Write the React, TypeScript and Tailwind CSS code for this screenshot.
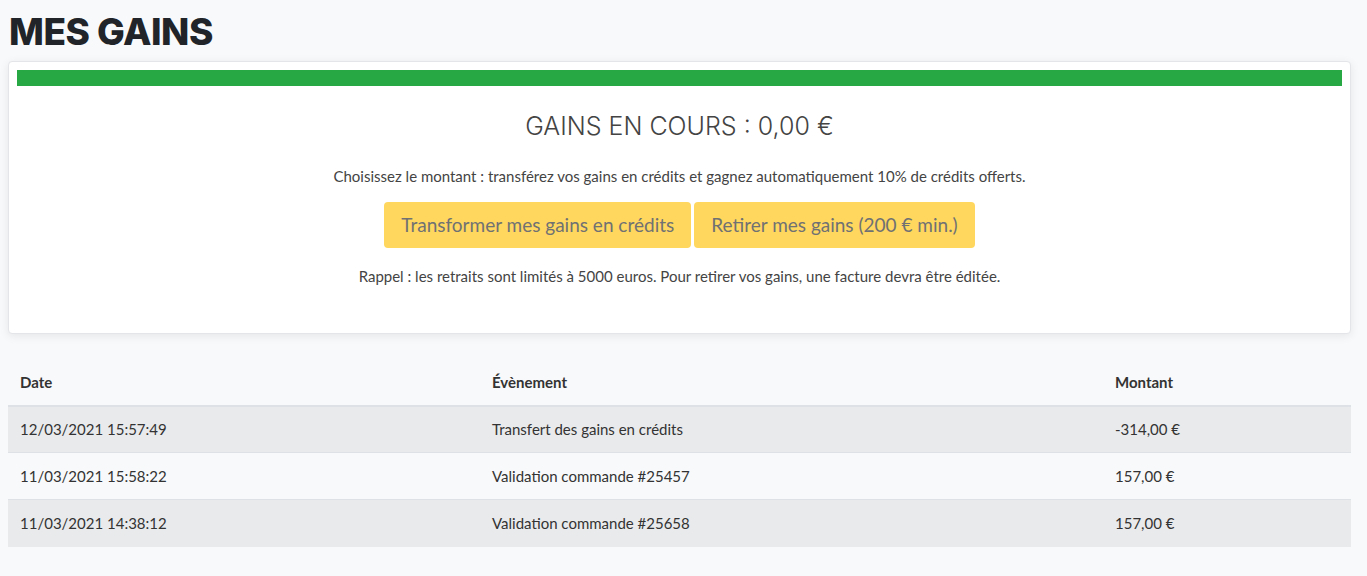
import React from 'react';

interface GainRow {
  date: string;
  event: string;
  amount: string;
}

const rows: GainRow[] = [
  { date: '12/03/2021 15:57:49', event: 'Transfert des gains en crédits', amount: '-314,00 €' },
  { date: '11/03/2021 15:58:22', event: 'Validation commande #25457', amount: '157,00 €' },
  { date: '11/03/2021 14:38:12', event: 'Validation commande #25658', amount: '157,00 €' },
];

export default function App() {
  return (
    <div className="min-h-[576px] bg-[#f8f9fa] px-2 pt-[9px] text-[#212529] font-['Lato',sans-serif]">
      <h1 className="pl-px text-[37px] leading-[46px] font-extrabold tracking-[-0.5px] text-[#212529] font-['Inter',sans-serif]">
        MES GAINS
      </h1>

      <div className="mt-[6px] w-[1343px] rounded border border-[#e3e5e8] bg-white p-2 pb-[47px] shadow-[0_2px_10px_rgba(0,0,0,0.08)]">
        <div className="h-4 bg-[#28a745]" />
        <div className="flex flex-col items-center">
          <h2 className="mt-[22px] text-[25px] leading-[36px] font-light text-[#444] font-['Inter',sans-serif]">
            GAINS EN COURS : 0,00 €
          </h2>
          <p className="mt-[22px] text-[15px] leading-[20px] text-[#444]">
            Choisissez le montant : transférez vos gains en crédits et gagnez automatiquement 10% de crédits offerts.
          </p>
          <div className="mt-[16px] flex gap-[3px]">
            <button disabled className="h-[46px] rounded-[4px] bg-[#ffd75e] px-[17px] text-[19px] text-[#707173]">
              Transformer mes gains en crédits
            </button>
            <button disabled className="h-[46px] rounded-[4px] bg-[#ffd75e] px-[17px] text-[19px] text-[#707173]">
              Retirer mes gains (200 € min.)
            </button>
          </div>
          <p className="mt-[18px] text-[15px] leading-[20px] text-[#444]">
            Rappel : les retraits sont limités à 5000 euros. Pour retirer vos gains, une facture devra être éditée.
          </p>
        </div>
      </div>

      <table className="mt-[26px] w-[1343px] border-collapse text-left text-[15px] text-[#333]">
        <thead>
          <tr className="border-b-2 border-[#dee2e6]">
            <th className="w-[472px] px-3 pb-[11px] pt-[11px] font-bold">Date</th>
            <th className="w-[623px] px-3 pb-[11px] pt-[11px] font-bold">Évènement</th>
            <th className="px-3 pb-[11px] pt-[11px] font-bold">Montant</th>
          </tr>
        </thead>
        <tbody>
          {rows.map((row, i) => (
            <tr
              key={i}
              className={`border-t border-[#dee2e6] ${i % 2 === 0 ? 'bg-[#e9eaec]' : 'bg-[#f8f9fa]'}`}
            >
              <td className="h-[47px] px-3">{row.date}</td>
              <td className="h-[47px] px-3">{row.event}</td>
              <td className="h-[47px] px-3">{row.amount}</td>
            </tr>
          ))}
        </tbody>
      </table>
    </div>
  );
}
